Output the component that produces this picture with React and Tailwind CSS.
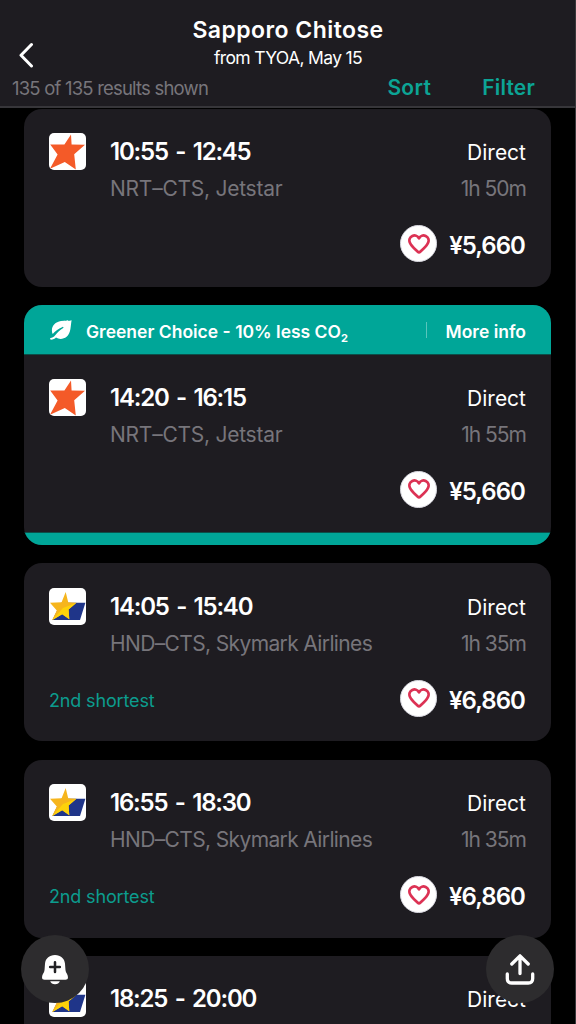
import clsx from "clsx";

const flights = [
  { time: "10:55 - 12:45", route: "NRT–CTS, Jetstar", duration: "1h 50m", price: "¥5,660", airline: "jetstar" },
  { time: "14:20 - 16:15", route: "NRT–CTS, Jetstar", duration: "1h 55m", price: "¥5,660", airline: "jetstar", green: true },
  { time: "14:05 - 15:40", route: "HND–CTS, Skymark Airlines", duration: "1h 35m", price: "¥6,860", airline: "skymark", note: "2nd shortest" },
  { time: "16:55 - 18:30", route: "HND–CTS, Skymark Airlines", duration: "1h 35m", price: "¥6,860", airline: "skymark", note: "2nd shortest" },
  { time: "18:25 - 20:00", airline: "skymark" },
];

const AirlineLogo = ({ airline }) => (
  <svg viewBox="0 0 37 37" className="size-[37px] shrink-0 rounded-[5px] bg-white">
    {airline === "jetstar" ? (
      <path
        d="M22 1.5 22.6 11.4 36 11.7 25.2 21.3 26.8 36.6 15.8 29 1 35.8 8.6 21.6 1.2 11.6 15.4 11.4Z"
        fill="#f45a28"
      />
    ) : (
      <>
        <path d="M12 14.7H36.4L31 32H3.5Z" fill="#1f3589" />
        <path d="M16.7 4 19.2 14.3 27.5 14.8 19.6 21.6 20.3 31.3 13.2 26.3 3 32.2 7.8 22.6 1 14.8 12.6 14.3Z" fill="#f6b51d" />
        <path d="M27.5 14.8 19.6 21.6 20.3 31.3 13.2 26.3 3 32.2 14 20Z" fill="#fdd20a" />
      </>
    )}
  </svg>
);

const HeartButton = () => (
  <button className="flex size-[37px] items-center justify-center rounded-full border border-[#d9d8e0] bg-white">
    <svg viewBox="0 0 22 20" className="h-5 w-[22px]" fill="none" stroke="#dc3254" strokeWidth="2.7" strokeLinejoin="round">
      <path d="M11 4.3C9.6 1.5 6.7.9 4.3 2 1.7 3.2.8 6 1.8 8.5 3.4 12.4 7.2 15.2 9.8 17.8Q11 19 12.2 17.8C14.8 15.2 18.6 12.4 20.2 8.5 21.2 6 20.3 3.2 17.7 2 15.3.9 12.4 1.5 11 4.3Z" />
    </svg>
  </button>
);

const FlightCard = ({ flight }) => (
  <article className="shrink-0 overflow-hidden rounded-[18px] bg-[#1e1c21]">
    {flight.green && (
      <div className="flex h-[50px] items-center border-b border-[#0b4f49] bg-[#00a698] pr-[25px] pl-[26px] pt-1 text-[17.5px] font-semibold">
        <svg viewBox="0 0 22 20" className="mb-1 h-5 w-[22px]">
          <path d="M21.6.2C19.5 1 15.5.4 11 1 5.4 1.8 1.8 5.8 1.9 10.4c0 1.5.3 2.6.8 3.5C5 11.5 8 8.5 12.6 6.9c.8-.2 1.2.5.6 1-3 1.7-5.8 4.5-8 7.4C3.8 17.2 2 17.8.7 18c-1 .3-.8 1.7.3 1.7 2 0 3.7-.7 5-2.1 3 2 7.4 1.8 10.6-.8C21.2 13 20.6 5 21.6.2Z" fill="#fff" />
        </svg>
        <span className="ml-3.5 whitespace-nowrap">
          Greener Choice - 10% less CO<span className="relative top-1 text-[11px] font-bold">2</span>
        </span>
        <span className="mr-[19px] mb-1 ml-auto h-4 w-px bg-white/35" />
        <span>More info</span>
      </div>
    )}

    <div className={clsx("flex px-[25px]", flight.green ? "h-[176.5px] pt-[23.6px]" : "h-[178px] pt-[24.4px]")}>
      <div className="flex w-[61px] shrink-0 flex-col">
        <AirlineLogo airline={flight.airline} />
        {flight.note && (
          <p className="mt-[57px] text-[18px] leading-[37px] tracking-[-0.15px] whitespace-nowrap text-[#0c9c8e]">
            {flight.note}
          </p>
        )}
      </div>

      <div className="min-w-0 flex-1">
        <div className="flex justify-between text-white">
          <span className="text-[24px] leading-[37px] font-semibold tracking-[-1.2px] [word-spacing:2.6px]">{flight.time}</span>
          <span className="text-[21px] leading-[39px]">Direct</span>
        </div>
        {flight.route && (
          <>
            <div className="-mt-0.5 flex justify-between text-[21px] leading-[37px] text-[#77757b]">
              <span className={clsx("whitespace-nowrap", flight.airline === "jetstar" ? "tracking-[-0.25px]" : "tracking-[-0.63px]")}>
                {flight.route}
              </span>
              <span className="tracking-[-1px]">{flight.duration}</span>
            </div>
            <div className="mt-[18px] flex items-center justify-end gap-3 text-white">
              <HeartButton />
              <span className="pt-1 pr-px text-[24px] leading-[33px] font-semibold tracking-[-0.95px]">{flight.price}</span>
            </div>
          </>
        )}
      </div>
    </div>

    {flight.green && <div className="h-[13px] border-t border-[#0b4f49] bg-[#00a698]" />}
  </article>
);

const Header = () => (
  <header className="h-[108px] shrink-0 border-b-2 border-[#37363a] bg-[#1e1c21] text-white">
    <div className="relative flex h-[73px] flex-col items-center pt-[15px]">
      <svg viewBox="0 0 16 26" className="absolute top-[42px] left-[18px] h-[26px] w-4" fill="none" stroke="#fff" strokeWidth="3" strokeLinecap="round" strokeLinejoin="round">
        <path d="M13.5 2.5 3 13.2 13.5 24" />
      </svg>
      <h1 className="text-[23px] leading-[30px] font-semibold tracking-[0.45px]">Sapporo Chitose</h1>
      <p className="text-[17.5px] leading-[26px] tracking-[-0.65px]">from TYOA, May 15</p>
    </div>
    <div className="flex items-center pr-[41px] pl-3 leading-[30px]">
      <span className="text-[18.5px] tracking-[-0.8px] text-[#77757b]">135 of 135 results shown</span>
      <button className="mr-[51px] ml-auto text-[21px] font-semibold tracking-[0.3px] text-[#0ca495]">Sort</button>
      <button className="text-[21px] font-semibold tracking-[0.2px] text-[#0ca495]">Filter</button>
    </div>
  </header>
);

const App = () => (
  <main className="relative flex h-[1024px] w-[576px] flex-col overflow-hidden bg-black font-['Inter',sans-serif] text-white">
    <Header />

    <section className="flex flex-col gap-[18.4px] pt-px pr-[25px] pl-6">
      {flights.map((flight) => (
        <FlightCard key={flight.time} flight={flight} />
      ))}
    </section>

    {/* Floating actions */}
    <button className="absolute top-[935px] left-[21px] flex size-[68px] items-center justify-center rounded-full bg-[#2d2c2e]">
      <svg viewBox="0 0 28 32" className="h-[31px] w-7">
        <path d="M14 1C8 1 4.2 4.7 3.7 9.8L3.2 16.5C3 19.5.6 20.8.6 24c0 1.8 1 2.6 2.6 2.6H24.8c1.6 0 2.6-.8 2.6-2.6 0-3.2-2.4-4.5-2.6-7.5L24.3 9.8C23.8 4.7 20 1 14 1Z" fill="#fff" />
        <path d="M9 28.2H19C18.2 30.1 16.5 31.2 14 31.2S9.8 30.1 9 28.2Z" fill="#fff" />
        <path d="M14 8.5V18.5M9 13.5H19" stroke="#222124" strokeWidth="2.6" strokeLinecap="round" />
      </svg>
    </button>
    <button className="absolute top-[935px] left-[486px] flex size-[68px] items-center justify-center rounded-full bg-[#2d2c2e]">
      <svg viewBox="0 0 30 32" className="h-8 w-[30px]" fill="none" stroke="#fff" strokeWidth="3.3" strokeLinecap="round" strokeLinejoin="round">
        <path d="M15 20.5V3M6.8 11 15 2.8 23.2 11M2.3 21V25.5Q2.3 30 6.8 30H23.2Q27.7 30 27.7 25.5V21" />
      </svg>
    </button>

    <div className="pointer-events-none absolute inset-y-0 right-0 w-px bg-[#39383b]" />
  </main>
);

export default App;
